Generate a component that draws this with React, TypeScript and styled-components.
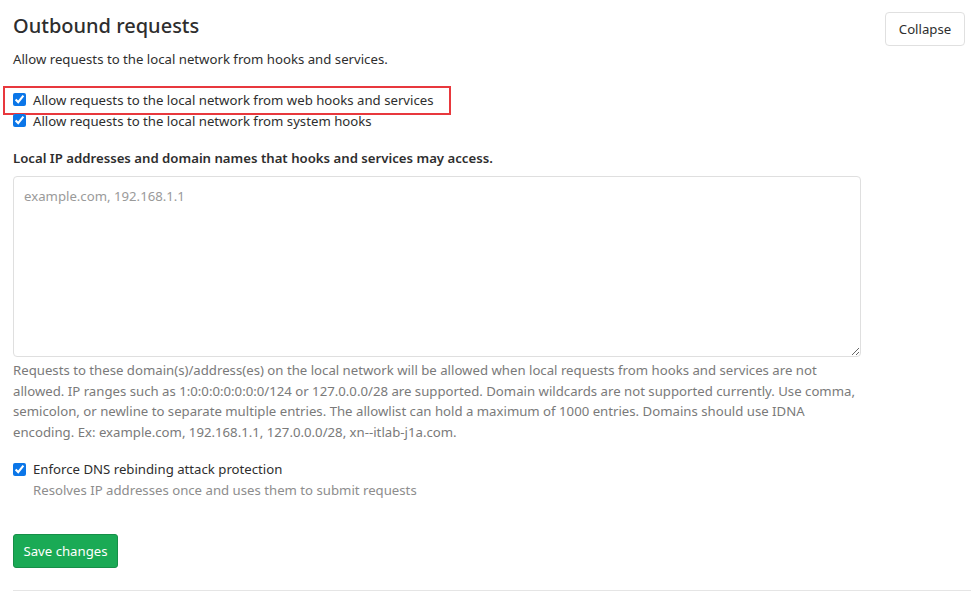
import React from "react";
import styled, { createGlobalStyle } from "styled-components";

const Global = createGlobalStyle`
  html, body { margin: 0; padding: 0; background: #fff; }
  body { font-family: "Noto Sans", "Open Sans", sans-serif; color: #2e2e2e; }
  * { box-sizing: border-box; }
`;

const Page = styled.div`
  width: 971px;
  height: 609px;
  padding: 0 0 0 13px;
  overflow: hidden;
`;

const Header = styled.div`
  display: flex;
  justify-content: space-between;
  align-items: flex-start;
  padding-top: 12px;
  padding-right: 6px;
`;

const Title = styled.h4`
  margin: 0;
  font-size: 20px;
  font-weight: 500;
  line-height: 28px;
  color: #2e2e2e;
`;

const CollapseButton = styled.button`
  height: 34px;
  width: 80px;
  background: #fff;
  border: 1px solid #e0e0e0;
  border-radius: 4px;
  font-family: inherit;
  font-size: 13.2px;
  color: #2e2e2e;
  padding: 0;
`;

const Lead = styled.p`
  margin: 0;
  margin-top: 3px;
  font-size: 13.2px;
  line-height: 20px;
  color: #2e2e2e;
`;

const CheckList = styled.div`
  margin-top: 20px;
  display: flex;
  flex-direction: column;
`;

const CheckRow = styled.label<{ $highlight?: boolean }>`
  position: relative;
  display: flex;
  align-items: center;
  gap: 7px;
  height: 21px;
  font-size: 13.2px;
  color: #2e2e2e;
  ${(p) =>
    p.$highlight
      ? `&::after { content: ""; position: absolute; left: -10px; top: -3px; width: 444px; height: 25px; border: 2px solid #e8383d; pointer-events: none; }`
      : ""}
`;

const Box = styled.input.attrs({ type: "checkbox" })`
  margin: 0;
  width: 13px;
  height: 13px;
  accent-color: #0b76e8;
`;

const FieldLabel = styled.div`
  margin-top: 17px;
  font-size: 13.2px;
  font-weight: 600;
  line-height: 20px;
  color: #2e2e2e;
`;

const TextArea = styled.textarea`
  display: block;
  margin-top: 8px;
  width: 848px;
  height: 181px;
  border: 1px solid #dfdfdf;
  border-radius: 4px;
  padding: 9px 10px;
  font-family: inherit;
  font-size: 13.2px;
  line-height: 20px;
  color: #2e2e2e;
  resize: vertical;
  &::placeholder { color: #9a9a9a; }
`;

const Help = styled.p`
  margin: 3px 0 0 0;
  width: 850px;
  font-size: 13.2px;
  line-height: 20.7px;
  color: #7a7a7a;
`;

const Option = styled.div`
  margin-top: 16px;
  display: flex;
  flex-direction: column;
`;

const SubHelp = styled.div`
  padding-left: 20px;
  font-size: 13.2px;
  line-height: 21px;
  color: #8d8d8d;
`;

const SaveButton = styled.button`
  margin-top: 33px;
  height: 34px;
  width: 105px;
  background: #1aaa55;
  border: 1px solid #168f48;
  border-radius: 3px;
  color: #fff;
  font-family: inherit;
  font-size: 13.2px;
  padding: 0;
`;

const Divider = styled.hr`
  margin: 22px 0 0 0;
  border: 0;
  border-top: 1px solid #e5e5e5;
`;

export default function App() {
  return (
    <Page>
      <Global />
      <Header>
        <Title>Outbound requests</Title>
        <CollapseButton>Collapse</CollapseButton>
      </Header>
      <Lead>Allow requests to the local network from hooks and services.</Lead>
      <CheckList>
        <CheckRow $highlight>
          <Box defaultChecked />
          Allow requests to the local network from web hooks and services
        </CheckRow>
        <CheckRow>
          <Box defaultChecked />
          Allow requests to the local network from system hooks
        </CheckRow>
      </CheckList>
      <FieldLabel>Local IP addresses and domain names that hooks and services may access.</FieldLabel>
      <TextArea placeholder="example.com, 192.168.1.1" />
      <Help>
        Requests to these domain(s)/address(es) on the local network will be allowed when local requests from hooks
        and services are not allowed. IP ranges such as 1:0:0:0:0:0:0:0/124 or 127.0.0.0/28 are supported. Domain
        wildcards are not supported currently. Use comma, semicolon, or newline to separate multiple entries. The
        allowlist can hold a maximum of 1000 entries. Domains should use IDNA encoding. Ex: example.com, 192.168.1.1,
        127.0.0.0/28, xn--itlab-j1a.com.
      </Help>
      <Option>
        <CheckRow>
          <Box defaultChecked />
          Enforce DNS rebinding attack protection
        </CheckRow>
        <SubHelp>Resolves IP addresses once and uses them to submit requests</SubHelp>
      </Option>
      <SaveButton>Save changes</SaveButton>
      <Divider />
    </Page>
  );
}
